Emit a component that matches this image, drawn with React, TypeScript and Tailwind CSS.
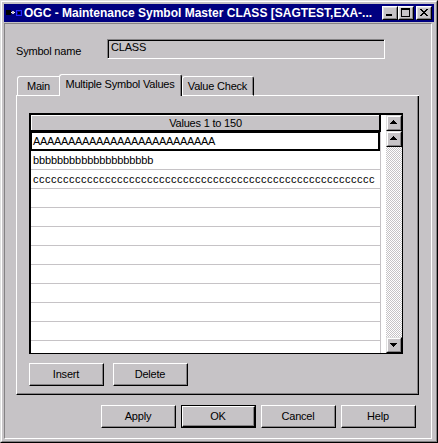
import React from "react";

function Raised({ children, className }: { children?: React.ReactNode; className: string }) {
  return (
    <div className={"border border-t-white border-l-white border-r-black border-b-black " + className}>
      <div className="h-full w-full border-r border-b border-r-[#848284] border-b-[#848284] flex items-center justify-center">
        {children}
      </div>
    </div>
  );
}

function PushButton({ label, isDefault }: { label: string; isDefault?: boolean }) {
  if (isDefault) {
    return (
      <div className="w-[75px] h-[23px] border border-black">
        <Raised className="w-full h-full">{label}</Raised>
      </div>
    );
  }
  return <Raised className="w-[75px] h-[23px]">{label}</Raised>;
}

function ScrollBtn({ down }: { down?: boolean }) {
  return (
    <div className="w-[16px] h-[16px] border border-t-[#dfdfdf] border-l-[#dfdfdf] border-r-black border-b-black">
      <div className="w-full h-full border border-t-white border-l-white border-r-[#848284] border-b-[#848284] bg-[#c6c3c6]">
        <svg width="12" height="12" shapeRendering="crispEdges">
          {down ? (
            <g fill="#000">
              <rect x="2" y="4" width="7" height="1" />
              <rect x="3" y="5" width="5" height="1" />
              <rect x="4" y="6" width="3" height="1" />
              <rect x="5" y="7" width="1" height="1" />
            </g>
          ) : (
            <g fill="#000">
              <rect x="5" y="3" width="1" height="1" />
              <rect x="4" y="4" width="3" height="1" />
              <rect x="3" y="5" width="5" height="1" />
              <rect x="2" y="6" width="7" height="1" />
            </g>
          )}
        </svg>
      </div>
    </div>
  );
}

function TitleBtn({ kind }: { kind: "min" | "max" | "close" }) {
  return (
    <div className="w-[16px] h-[14px] border border-t-white border-l-white border-r-black border-b-black">
      <div className="w-full h-full border border-t-[#dfdfdf] border-l-[#dfdfdf] border-r-[#848284] border-b-[#848284] bg-[#c6c3c6]">
        <svg width="12" height="10" shapeRendering="crispEdges">
          <g fill="#000">
            {kind === "min" && <rect x="2" y="6" width="6" height="2" />}
            {kind === "max" && (
              <>
                <rect x="1" y="0" width="9" height="2" />
                <rect x="1" y="0" width="1" height="9" />
                <rect x="9" y="0" width="1" height="9" />
                <rect x="1" y="8" width="9" height="1" />
              </>
            )}
            {kind === "close" &&
              [0, 1, 2, 3, 4, 5, 6].map((i) => (
                <React.Fragment key={i}>
                  <rect x={2 + i} y={1 + i} width="2" height="1" />
                  <rect x={8 - i} y={1 + i} width="2" height="1" />
                </React.Fragment>
              ))}
          </g>
        </svg>
      </div>
    </div>
  );
}

const rows: { text: string; track: string }[] = [
  { text: "A".repeat(26), track: "tracking-[-0.34px]" },
  { text: "b".repeat(20), track: "tracking-[-0.1px]" },
  { text: "c".repeat(57), track: "tracking-[0.5px]" },
  { text: "", track: "" },
  { text: "", track: "" },
  { text: "", track: "" },
  { text: "", track: "" },
  { text: "", track: "" },
  { text: "", track: "" },
  { text: "", track: "" },
  { text: "", track: "" },
  { text: "", track: "" },
];

export default function App() {
  return (
    <div className="w-[438px] h-[443px] bg-[#c6c3c6] font-['Liberation_Sans',Arial,sans-serif] text-[11px] leading-[13px] tracking-[-0.2px] text-black overflow-hidden">
      <div className="h-full border border-t-[#dfdfdf] border-l-[#dfdfdf] border-r-black border-b-black">
        <div className="h-full border border-t-white border-l-white border-r-[#848284] border-b-[#848284] p-[2px] flex flex-col">
          {/* Title bar */}
          <div className="h-[18px] bg-[#000080] flex items-center shrink-0">
            <svg width="18" height="8" className="ml-[1px]" shapeRendering="crispEdges">
              <rect x="1" y="1" width="5" height="5" fill="#000" />
              <rect x="6" y="3" width="4" height="1" fill="#fff" />
              <rect x="7" y="2" width="2" height="3" fill="#c6c3c6" />
              <rect x="11.5" y="1.5" width="5" height="5" fill="none" stroke="#2a2aff" />
              <rect x="13" y="3" width="2" height="2" fill="#000" />
            </svg>
            <span className="ml-[1px] text-white font-bold text-[12px] tracking-normal whitespace-nowrap">
              OGC - Maintenance Symbol Master CLASS [SAGTEST,EXA-...
            </span>
            <div className="flex-1" />
            <TitleBtn kind="min" />
            <TitleBtn kind="max" />
            <div className="w-[2px]" />
            <TitleBtn kind="close" />
            <div className="w-[2px]" />
          </div>

          {/* Inner frame */}
          <div className="mt-[1px] mr-[2px] flex-1 border border-t-[#848284] border-l-[#848284] border-r-white border-b-white flex flex-col">
            {/* Symbol name row */}
            <div className="mt-[15px] pl-[11px] flex">
              <div className="w-[91px] pt-[6px]">Symbol name</div>
              <div className="w-[278px] h-[20px] border border-t-[#848284] border-l-[#848284] border-r-white border-b-white">
                <div className="w-full h-full border-t border-l border-black pl-[2px]">CLASS</div>
              </div>
            </div>

            {/* Tabs */}
            <div className="mt-[15px] ml-[11px] w-[403px] h-[22px] flex items-end">
              <div className="w-[1px] h-[1px] bg-white" />
              <div className="w-[42px] h-[20px] border-t border-l border-b border-white rounded-tl-[3px] flex justify-center pt-[3px]">
                Main
              </div>
              <div className="w-[123px] h-[22px] border-t border-l border-r border-t-white border-l-white border-r-black rounded-t-[3px]">
                <div className="h-full border-r border-r-[#848284] flex justify-center pt-[3px] whitespace-nowrap">
                  Multiple Symbol Values
                </div>
              </div>
              <div className="w-[72px] h-[20px] border border-t-white border-l-white border-b-white border-r-black rounded-t-[3px]">
                <div className="h-full border-r border-r-[#848284] flex justify-center pt-[3px] whitespace-nowrap">
                  Value Check
                </div>
              </div>
              <div className="flex-1 h-[1px] bg-white" />
            </div>

            {/* Panel */}
            <div className="ml-[11px] w-[403px] h-[299px] border-l border-r border-b border-l-white border-r-black border-b-black">
              <div className="h-full border-r border-b border-r-[#848284] border-b-[#848284] pt-[17px] pl-[12px] flex flex-col">
                {/* Grid */}
                <div className="w-[374px] h-[241px] border-t-2 border-l-2 border-r border-b border-black bg-white flex">
                  <div className="w-[350px] h-full flex flex-col overflow-hidden">
                    <div className="h-[17px] shrink-0 bg-[#c6c3c6] border-b-2 border-r-2 border-black">
                      <div className="h-full border-t border-l border-white flex items-center justify-center">
                        Values 1 to 150
                      </div>
                    </div>
                    <div className="flex-1 border-r border-[#c6c3c6] overflow-hidden">
                      {rows.map((r, i) =>
                        i === 0 ? (
                          <div
                            key={i}
                            className={"h-[19px] border border-r-2 border-b-2 border-black pl-[1px] pt-[2px] whitespace-nowrap overflow-hidden " + r.track}
                          >
                            {r.text}
                          </div>
                        ) : (
                          <div
                            key={i}
                            className={"h-[19px] border-b border-[#c6c3c6] pl-[2px] pt-[3px] whitespace-nowrap overflow-hidden " + r.track}
                          >
                            {r.text}
                          </div>
                        )
                      )}
                    </div>
                  </div>
                  <div className="w-[5px]" />
                  <div className="w-[16px] h-full flex flex-col">
                    <ScrollBtn />
                    <ScrollBtn />
                    <div className="flex-1 bg-[image:repeating-conic-gradient(#c6c3c6_0_25%,#ffffff_0_50%)] bg-[length:2px_2px]" />
                    <ScrollBtn down />
                  </div>
                </div>

                <div className="mt-[9px] flex gap-[9px]">
                  <PushButton label="Insert" />
                  <PushButton label="Delete" />
                </div>
              </div>
            </div>

            {/* Bottom buttons */}
            <div className="mt-[10px] pl-[96px] flex gap-[5px]">
              <PushButton label="Apply" />
              <PushButton label="OK" isDefault />
              <PushButton label="Cancel" />
              <PushButton label="Help" />
            </div>
          </div>
        </div>
      </div>
    </div>
  );
}
